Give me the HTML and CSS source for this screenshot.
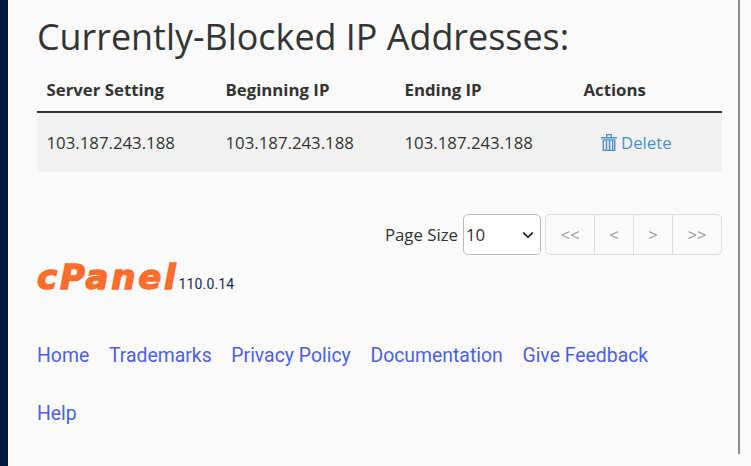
FILE: index.html
```html
<!DOCTYPE html>
<html lang="en">
<head>
<meta charset="utf-8">
<title>Currently-Blocked IP Addresses</title>
<link rel="stylesheet" href="styles.css">
</head>
<body>
<div class="sidebar"></div>
<main class="content">
  <h2 class="title">Currently-Blocked IP Addresses:</h2>
  <table class="table">
    <colgroup><col class="col-ip"><col class="col-ip"><col class="col-ip"><col></colgroup>
    <thead>
      <tr><th>Server Setting</th><th>Beginning IP</th><th>Ending IP</th><th>Actions</th></tr>
    </thead>
    <tbody>
      <tr>
        <td>103.187.243.188</td><td>103.187.243.188</td><td>103.187.243.188</td>
        <td><a class="delete" href="#"><svg class="trash" viewBox="0 0 16 18" width="16" height="18" aria-hidden="true"><path d="M0 4h16v1.4H0zM5 4V1h6v3h-1.3V2.3H6.3V4zM1.6 6.2h12.8V18H1.6zM3 7.4v9.4h1.7V7.4zm3.2 0v9.4h1.6V7.4zm3.1 0v9.4H11V7.4zm3 0v9.4H13V7.4z" fill-rule="evenodd"/></svg>Delete</a></td>
      </tr>
    </tbody>
  </table>
  <div class="pager">
    <label class="size-label" for="size">Page Size</label>
    <div class="select"><span>10</span><svg viewBox="0 0 12 8" width="12" height="8" aria-hidden="true"><path d="M1.2 1.5 6 6.2l4.8-4.7" fill="none" stroke="#333" stroke-width="1.8"/></svg></div>
    <div class="buttons"><span>&lt;&lt;</span><span>&lt;</span><span>&gt;</span><span>&gt;&gt;</span></div>
  </div>
  <div class="brand"><span class="logo">cPanel</span><span class="version">110.0.14</span></div>
  <nav class="links">
    <a href="#">Home</a><a href="#">Trademarks</a><a href="#">Privacy Policy</a><a href="#">Documentation</a><a href="#">Give Feedback</a><a href="#">Help</a>
  </nav>
</main>
<div class="scrollbar"></div>
</body>
</html>
```
FILE: styles.css
```css
* { box-sizing: border-box; }
html, body { margin: 0; height: 466px; overflow: hidden; }
body { display: flex; background: #fafafa; font-family: "Open Sans", sans-serif; color: #333; }
.sidebar { width: 8px; flex: none; background: #001a3f; }
.content { width: 701px; flex: none; margin-left: 29px; }
.scrollbar { width: 2px; height: 454px; flex: none; background: #8a8a8a; }
.title { margin: 0; height: 72px; padding-top: 12px; font-size: 35.9px; line-height: 49px; font-weight: 400; color: #333; }
.table { width: 685px; border-collapse: collapse; table-layout: fixed; font-size: 16.8px; }
.col-ip { width: 179px; }
.table th { height: 40px; padding: 0 10px 5px 9.5px; text-align: left; font-weight: 700; border-bottom: 2px solid #333; line-height: 23px; }
.table td { height: 60px; padding: 0 10px 0 9.5px; background: #f1f1f1; line-height: 23px; }
.delete { display: flex; align-items: center; margin-left: 17.5px; color: #4a90d0; text-decoration: none; }
.trash { fill: #4a90d0; margin-right: 4px; margin-bottom: 2px; }
.pager { display: flex; justify-content: flex-end; align-items: center; width: 685px; margin-top: 42px; height: 41px; }
.size-label { font-size: 16.8px; margin-right: 5px; }
.select { width: 78px; height: 41px; display: flex; align-items: center; justify-content: space-between; padding: 0 6px 0 2px; background: #fff; border: 1px solid #bbb; border-radius: 5px; font-size: 16.8px; }
.buttons { display: flex; margin-left: 4px; height: 41px; border: 1px solid #ddd; border-radius: 5px; background: #fafafa; font-size: 16.8px; color: #999; }
.buttons span { display: flex; align-items: center; justify-content: center; width: 39px; border-left: 1px solid #ddd; }
.buttons span:first-child { width: 48px; border-left: 0; }
.buttons span:last-child { width: 49px; }
.brand { display: flex; align-items: flex-end; height: 41px; margin-top: 1px; }
.logo { font-family: "DejaVu Sans", sans-serif; font-weight: 700; font-style: italic; font-size: 34px; line-height: 40px; color: #ff6c2c; letter-spacing: 2.8px; -webkit-text-stroke: 1.4px #ff6c2c; }
.version { font-family: "Roboto", sans-serif; font-size: 14px; line-height: 18px; letter-spacing: 0.15px; color: #1b2a55; margin: 0 0 4px 0; }
.links { display: flex; flex-wrap: wrap; column-gap: 19.7px; width: 685px; margin-top: 30px; font-family: "Roboto", sans-serif; font-size: 19.4px; line-height: 58px; }
.links a { color: #4d5fe8; text-decoration: none; }
.links a:last-child { flex-basis: 100%; }
```
